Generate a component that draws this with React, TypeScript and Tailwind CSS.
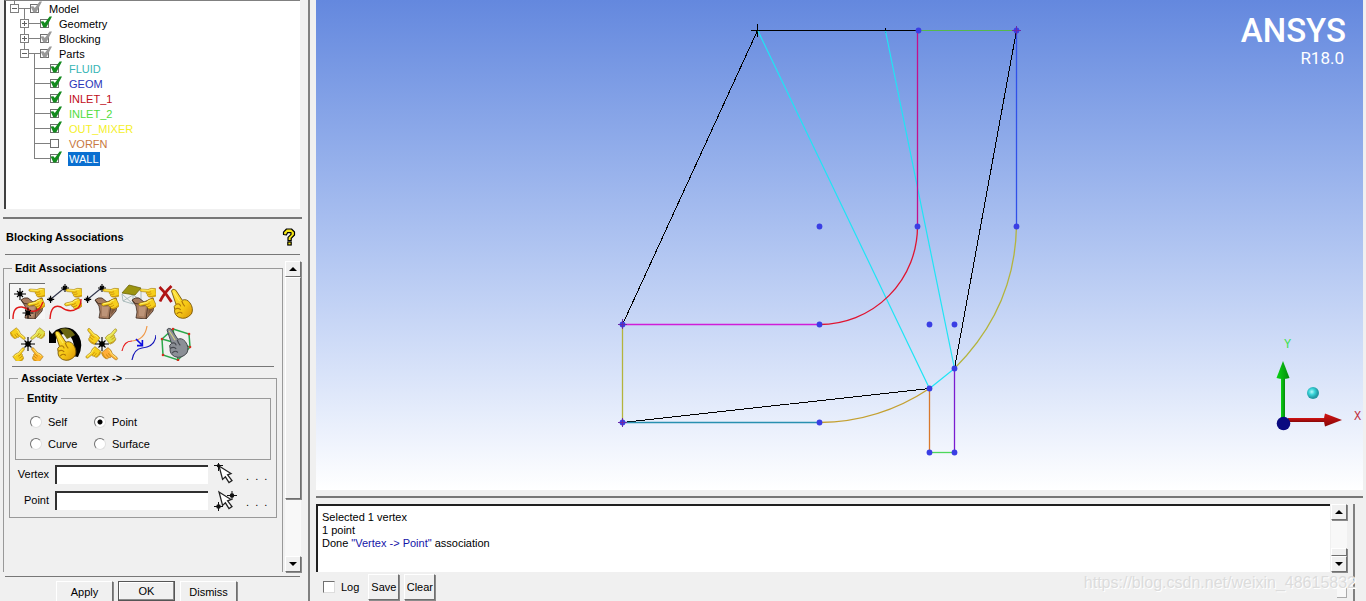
import React, { useState } from "react";

const RAISED =
  "border border-t-white border-l-white border-r-[#6f6f6f] border-b-[#6f6f6f] bg-[#f0f0f0] shadow-[1px_1px_0_#8a8a8a]";

/* ---------- model tree ---------- */

type CheckState = "on" | "mixed" | "off";

function TreeCheck({ id, state }: { id: string; state: CheckState }) {
  return (
    <span className="relative block h-[9px] w-[9px] shrink-0">
      <input
        id={id}
        type="checkbox"
        defaultChecked={state !== "off"}
        className="peer block h-[9px] w-[9px] appearance-none border border-[#6f6f6f] bg-white"
      />
      <svg
        className={
          "pointer-events-none absolute -top-[3px] left-0 hidden h-[13px] w-[13px] peer-checked:block " +
          (state === "mixed" ? "text-[#9a9a9a]" : "text-[#138a1e]")
        }
        viewBox="0 0 13 13"
      >
        <path d="M0.6 5.6 L3.4 5.2 L4.8 7 L9.6 0.6 L12 0.6 L6.2 11.4 L3.4 11.4 Z" fill="currentColor" />
      </svg>
    </span>
  );
}

function Expander({ open, onClick, label, place }: { open: boolean; onClick: () => void; label: string; place: string }) {
  return (
    <button
      type="button"
      aria-label={label}
      onClick={onClick}
      className={"absolute top-[3px] h-[9px] w-[9px] border border-[#808080] bg-white " + place}
    >
      <svg viewBox="0 0 7 7" className="block h-[7px] w-[7px]" shapeRendering="crispEdges">
        <path d={open ? "M1 3.5H6" : "M1 3.5H6M3.5 1V6"} stroke="#606060" fill="none" />
      </svg>
    </button>
  );
}

function Guides({ width, d }: { width: string; d: string }) {
  return (
    <svg className={"h-[15px] shrink-0 " + width} shapeRendering="crispEdges">
      <path d={d} stroke="#808080" fill="none" />
    </svg>
  );
}

const PARTS: { name: string; color: string; state: CheckState }[] = [
  { name: "FLUID", color: "text-[#35b5b5]", state: "on" },
  { name: "GEOM", color: "text-[#2a35b8]", state: "on" },
  { name: "INLET_1", color: "text-[#c00c18]", state: "on" },
  { name: "INLET_2", color: "text-[#4fdc3c]", state: "on" },
  { name: "OUT_MIXER", color: "text-[#f4f02a]", state: "on" },
  { name: "VORFN", color: "text-[#c87840]", state: "off" },
  { name: "WALL", color: "bg-[#0a6fd0] text-white", state: "on" },
];

function ModelTree() {
  const [model, setModel] = useState(true);
  const [parts, setParts] = useState(true);
  const row = "relative flex h-[15px] items-center";
  const label = "ml-[9px] px-px leading-[14px]";
  return (
    <div className="mr-2 ml-1 h-[209px] shrink-0 overflow-hidden border-t border-l-2 border-t-[#808080] border-l-[#404040] bg-white">
      <ul>
        <li>
          <div className={row}>
            <Guides width="w-[24px]" d="M8.5 0V4M12 7.5H24M18.5 7V15" />
            <Expander open={model} onClick={() => setModel(!model)} label="Toggle Model" place="left-[4px]" />
            <TreeCheck id="t-model" state="mixed" />
            <label htmlFor="t-model" className={label}>Model</label>
          </div>
        </li>
        {model && (
          <>
            <li className={row}>
              <Guides width="w-[34px]" d="M18.5 0V15M22 7.5H34" />
              <Expander open={false} onClick={() => {}} label="Toggle Geometry" place="left-[14px]" />
              <TreeCheck id="t-geometry" state="on" />
              <label htmlFor="t-geometry" className={label}>Geometry</label>
            </li>
            <li className={row}>
              <Guides width="w-[34px]" d="M18.5 0V15M22 7.5H34" />
              <Expander open={false} onClick={() => {}} label="Toggle Blocking" place="left-[14px]" />
              <TreeCheck id="t-blocking" state="mixed" />
              <label htmlFor="t-blocking" className={label}>Blocking</label>
            </li>
            <li className={row}>
              <Guides width="w-[34px]" d="M18.5 0V7M22 7.5H34M28.5 7V15" />
              <Expander open={parts} onClick={() => setParts(!parts)} label="Toggle Parts" place="left-[14px]" />
              <TreeCheck id="t-parts" state="mixed" />
              <label htmlFor="t-parts" className={label}>Parts</label>
            </li>
            {parts &&
              PARTS.map((p, i) => (
                <li key={p.name} className={row}>
                  <Guides width="w-[44px]" d={i === PARTS.length - 1 ? "M28.5 0V7.5H44" : "M28.5 0V15M28 7.5H44"} />
                  <TreeCheck id={"t-" + p.name} state={p.state} />
                  <label htmlFor={"t-" + p.name} className={label + " " + p.color}>
                    {p.name}
                  </label>
                </li>
              ))}
          </>
        )}
      </ul>
    </div>
  );
}

/* ---------- icon pieces ---------- */

function Hand({ t, fill = "#f6cf1c", line = "#8a6408", shade = "#c98c0a" }: { t: string; fill?: string; line?: string; shade?: string }) {
  return (
    <g transform={t}>
      <path
        d="M0.3 2.6 Q0.2 1.2 2 1.2 L8.4 1.8 Q11 -0.3 16 0.6 L17 9.4 Q13 11.8 9.4 10.6 Q7.2 9.4 7.8 7.4 Q6 6.6 6.8 4.8 L1.6 4.2 Q0.4 3.8 0.3 2.6 Z"
        fill={fill}
        stroke={line}
        strokeWidth="0.5"
      />
      <path d="M7 4.8 Q9 5.6 11.5 4.4 M8 7.2 Q10 8 12 6.8 M9 9.8 Q12 10.8 16.4 8.6" stroke={shade} strokeWidth="0.9" fill="none" />
      <path d="M2 2.2 L8.8 2.8 Q11 1.4 14 1.8" stroke="#fff27a" strokeWidth="0.9" fill="none" />
    </g>
  );
}

function Star({ x, y, r = 5 }: { x: number; y: number; r?: number }) {
  return (
    <g stroke="#000" strokeWidth="1.1">
      <path d={`M${x - r} ${y}H${x + r}M${x} ${y - r}V${y + r}`} />
      <path d={`M${x - r / 2} ${y - r / 2}L${x + r / 2} ${y + r / 2}M${x + r / 2} ${y - r / 2}L${x - r / 2} ${y + r / 2}`} />
      <circle cx={x} cy={y} r={r / 3.2} />
    </g>
  );
}

function Block() {
  return (
    <g stroke="#3a261a" strokeWidth="0.8">
      <path d="M11 16 Q14 13 18 14 L23 18 L32 14 Q34 20 32 27 L25 35 L15 34 Q17 28 15 22 Z" fill="#a67c60" />
      <path d="M11 16 Q14 21 18 20 Q22 22 27 20 Q26 28 25 35 M27 20 L32.5 16" fill="none" />
      <path d="M18 22 Q22 24 25 22 L23 32.5 L18 32 Z" fill="#bd9478" stroke="none" />
      <path d="M28 21 L32 18 L31 26 L27 31 Z" fill="#7c583e" stroke="none" />
    </g>
  );
}

const TwoHands = () => (
  <>
    <Hand t="translate(18.5 4) scale(1 .85)" />
    <Hand t="translate(18 15.5) rotate(-18 9 6) scale(1 .95)" />
  </>
);

const BIG_HAND =
  "M1 2 Q2 -0.8 5.2 1.2 L11.6 11 Q15.6 9.2 19 13.4 Q23 19 20.6 24.4 Q15 30.6 8.5 28 Q3.4 25.4 4 20 Q2.6 16.8 5.4 15 Z";

function BigHand({ t, fill = "url(#gold)", line = "#7a5806", shade = "#b07808" }: { t: string; fill?: string; line?: string; shade?: string }) {
  return (
    <g transform={t}>
      <path d={BIG_HAND} fill={fill} stroke={line} strokeWidth="0.9" />
      <path d="M5.4 15 Q9 13.6 10 17 M4 20 Q8 17.6 10 20.6 M6 24.6 Q9 21.4 11.6 24 M11 11.5 Q12 15 14 17" stroke={shade} strokeWidth="1.1" fill="none" />
      <path d="M3 2.6 L9 12" stroke="#fff27a" strokeWidth="1" fill="none" opacity="0.7" />
    </g>
  );
}

const TOOLS: { name: string; art: React.ReactNode }[] = [
  {
    name: "Associate Vertex",
    art: (
      <>
        <Block />
        <TwoHands />
        <Star x={10} y={10} r={6} />
        <path d="M3 35 Q3 22 12 23 Q17 24 21 27 Q29 29 33 18" fill="none" stroke="#e01818" strokeWidth="1.4" />
        <Star x={18} y={29} r={5.5} />
      </>
    ),
  },
  {
    name: "Associate Edge to Curve",
    art: (
      <>
        <path d="M4 15 L18 3.5" stroke="#30344a" strokeWidth="1.1" />
        <Star x={3.6} y={15.4} r={3.6} />
        <Star x={18} y={4} r={4} />
        <TwoHands />
        <path d="M3 35 Q4 19 14 23 Q23 30 31 24 Q34 21 34 15" fill="none" stroke="#e01818" strokeWidth="1.4" />
      </>
    ),
  },
  {
    name: "Associate Edge to Surface",
    art: (
      <>
        <path d="M4 15 L18 3.5" stroke="#30344a" strokeWidth="1.1" />
        <Star x={3.6} y={15.4} r={3.6} />
        <Star x={18} y={4} r={4} />
        <Block />
        <TwoHands />
      </>
    ),
  },
  {
    name: "Associate Face to Surface",
    art: (
      <>
        <path d="M1 10 L2 17 L12 20 L20 16 L20 6 M12 11 V20 M1 10 L12 20 M12 11 L2 17 M12 11 L20 16" fill="none" stroke="#a3b5b5" strokeWidth="0.9" />
        <path d="M1 9 L8 1 L20 4 L14 11 Z" fill="#9c9410" stroke="#6b6408" strokeWidth="0.8" />
        <Block />
        <TwoHands />
      </>
    ),
  },
  {
    name: "Disassociate from Geometry",
    art: (
      <>
        <path d="M1.5 3 Q8 9 13.5 18 M13.5 2 Q6 9 2 17.5" fill="none" stroke="#b01414" strokeWidth="2.8" />
        <BigHand t="translate(12.5 5) scale(1.02)" />
      </>
    ),
  },
  {
    name: "Update Associations",
    art: (
      <>
        <Hand t="translate(14 13) rotate(45) translate(1 -3) scale(-.9 .9)" />
        <Hand t="translate(22 13) rotate(-45) translate(-1 -3) scale(.9) " fill="#dfe04a" />
        <Hand t="translate(14 23) rotate(-45) translate(1 -3) scale(-.9 .9)" />
        <Hand t="translate(22 23) rotate(45) translate(-1 -3) scale(.9)" fill="#ffb62e" />
        <Star x={18} y={18} r={7} />
      </>
    ),
  },
  {
    name: "Reset Association",
    art: (
      <>
        <path d="M2 4 V17 H9 V13 Q15 6 22 9 Q29 15 26 30 L31 31 Q37 20 32 10 Q24 -3 9 4 L5 8 Z" fill="#000" />
        <path d="M13 3 Q23 0 28 9 L20 13 Z" fill="#6b6610" />
        <BigHand t="translate(7 5) scale(1.02)" />
      </>
    ),
  },
  {
    name: "Snap Project Vertices",
    art: (
      <>
        <Hand t="translate(3.5 3) rotate(45) translate(0 -3) scale(.95)" />
        <Hand t="translate(33 3.5) rotate(-45) translate(0 -3) scale(-.9 .9)" fill="#dfe04a" />
        <Hand t="translate(2.5 32.5) rotate(-45) translate(0 -3) scale(.9)" />
        <Hand t="translate(33 34) rotate(45) translate(0 -3) scale(-.95 .95)" fill="#ffae3a" />
        <Star x={18} y={18} r={7} />
      </>
    ),
  },
  {
    name: "Group Curves",
    art: (
      <>
        <path d="M1 25 Q3 15 11 15" fill="none" stroke="#e81c1c" strokeWidth="1.2" />
        <path d="M11 15 Q24 14 26 0" fill="none" stroke="#f09a4a" strokeWidth="1.2" />
        <path d="M11 34 Q13 23 21 22 Q34 21 35 9" fill="none" stroke="#1414b8" strokeWidth="1.2" />
        <path d="M15 13 L21 19 M21.4 14 V19.6 H16" fill="none" stroke="#0c0ce0" strokeWidth="1.6" />
      </>
    ),
  },
  {
    name: "Auto Associate",
    art: (
      <>
        <path d="M15 3 L31 8 L32 21 L20 34 L5 29 L4 13 Z M15 3 L20 34 M4 13 L32 21" fill="none" stroke="#2aa84a" strokeWidth="1.5" />
        <BigHand t="translate(8 2) scale(1.02)" fill="#8b8f96" line="#3c3f45" shade="#45484e" />
        {[[15, 3], [31, 8], [32, 21], [20, 34], [5, 29], [4, 13]].map(([x, y]) => (
          <circle key={x} cx={x} cy={y} r="1.3" fill="#d03020" />
        ))}
      </>
    ),
  },
];

function ToolGrid() {
  const [active, setActive] = useState(0);
  return (
    <div className="grid w-max grid-cols-5 gap-x-px gap-y-1.5 pt-2">
      {TOOLS.map((t, i) => (
        <button
          key={t.name}
          type="button"
          aria-label={t.name}
          aria-pressed={i === active}
          onClick={() => setActive(i)}
          className={
            "h-9 w-9 border-t border-l " + (i === active ? "border-[#6f6f6f] bg-[#f6f6f6]" : "border-transparent")
          }
        >
          <svg viewBox="0 0 35 35" className="block h-[35px] w-[35px]">
            {t.art}
          </svg>
        </button>
      ))}
    </div>
  );
}

/* ---------- small controls ---------- */

function Arrow({ up }: { up?: boolean }) {
  return (
    <svg viewBox="0 0 8 4" className="h-1 w-2">
      <path d={up ? "M0 4 L4 0 L8 4 Z" : "M0 0 L4 4 L8 0 Z"} fill="#000" />
    </svg>
  );
}

function ScrollButton({ up, label }: { up?: boolean; label: string }) {
  return (
    <button type="button" aria-label={label} className={"flex h-4 w-4 shrink-0 items-center justify-center " + RAISED}>
      <Arrow up={up} />
    </button>
  );
}

function Radio({ label, checked }: { label: string; checked?: boolean }) {
  return (
    <label className="flex h-[22px] items-center gap-1.5">
      <input
        type="radio"
        name="entity"
        defaultChecked={checked}
        className="m-0 h-3 w-3 appearance-none rounded-full border border-t-[#707070] border-r-[#e0e0e0] border-b-[#e0e0e0] border-l-[#707070] bg-white checked:bg-[radial-gradient(circle,#000_2px,#fff_3px)]"
      />
      {label}
    </label>
  );
}

function PickRow({ label, children }: { label: string; children: React.ReactNode }) {
  const id = "pick-" + label;
  return (
    <div className="flex h-[22px] items-center">
      <label htmlFor={id} className="w-[38px] text-right">
        {label}
      </label>
      <input
        id={id}
        className="ml-1.5 h-[19px] w-[153px] border-t-2 border-l-2 border-[#303030] bg-white px-1 outline-none"
      />
      <button type="button" aria-label={"Pick " + label.toLowerCase()} className="ml-1.5">
        <svg viewBox="0 0 24 22" className="block h-[22px] w-6">
          {children}
        </svg>
      </button>
      <button type="button" className="ml-2 pt-1 leading-3" aria-label={"More " + label.toLowerCase() + " options"}>
        .&nbsp; .&nbsp; .
      </button>
    </div>
  );
}

const POINTER = "M5 3 L17 10.5 L13.6 11.8 L18 17.6 L15 19.6 L11.4 13.8 L8.6 16.4 Z";

function SidePanel() {
  return (
    <aside className="flex w-[310px] shrink-0 flex-col border-r-2 border-[#808080]">
      <ModelTree />
      <div className="mt-2 mr-1.5 ml-[3px] h-0.5 shrink-0 bg-[#777]" />
      <header className="mr-2 ml-[5px] flex h-9 shrink-0 items-center justify-between border-b border-[#777] pr-1 pl-px">
        <h1 className="pt-0.5 text-[11px] font-bold">Blocking Associations</h1>
        <button type="button" aria-label="Help">
          <svg viewBox="0 0 14 18" className="block h-[18px] w-3.5">
            <path d="M1.5 6.5 V4.2 L4.5 1 H9.5 L12.5 4 V7 L9.2 10.4 V12.6 H6 V9.4 L9 6.4 V4.6 H5.6 L4.4 7 Z" fill="#f5e614" stroke="#000" strokeWidth="1.2" strokeLinejoin="round" />
            <rect x="5.8" y="14" width="3.4" height="3" fill="#f5e614" stroke="#000" strokeWidth="1.2" />
          </svg>
        </button>
      </header>

      <div className="mt-1.5 flex min-h-0 flex-1 pr-[7px] pl-[3px]">
        <fieldset className="min-w-0 flex-1 overflow-hidden border border-b-0 border-[#999]">
          <legend className="ml-2 px-[3px] leading-[14px] font-bold">Edit Associations</legend>
          <div className="px-[5px]">
            <ToolGrid />
            <div className="mt-[5px] mr-[3px] ml-[3px] h-px bg-[#777]" />
            <fieldset className="mt-1 border border-[#999] px-[5px] pb-1.5">
              <legend className="ml-[3px] px-[3px] leading-[14px] font-bold">Associate Vertex -&gt;</legend>
              <fieldset className="mt-1.5 border border-[#999]">
                <legend className="ml-2 px-[3px] leading-[14px] font-bold">Entity</legend>
                <div className="grid w-max grid-cols-2 gap-x-2 pt-1.5 pb-1 pl-3.5">
                  <Radio label="Self" />
                  <Radio label="Point" checked />
                  <Radio label="Curve" />
                  <Radio label="Surface" />
                </div>
              </fieldset>
              <div className="-ml-1 flex flex-col gap-1 pt-[3px]">
                <PickRow label="Vertex">
                  <path d={POINTER} fill="#fff" stroke="#222" strokeWidth="1.3" />
                  <path d="M0 2.5H9M4.5 0V8" stroke="#111" />
                  <circle cx="4.5" cy="2.8" r="1.8" fill="#111" />
                </PickRow>
                <PickRow label="Point">
                  <path d={POINTER} fill="#fff" stroke="#222" strokeWidth="1.3" />
                  <path d="M0 17.5H9M4.5 13V22M13 6.5H23M18 2V11" stroke="#111" />
                  <circle cx="4.5" cy="17.5" r="2.3" fill="#111" />
                  <circle cx="18" cy="6.5" r="2.3" fill="#111" />
                </PickRow>
              </div>
            </fieldset>
          </div>
        </fieldset>
        <div className="ml-[2px] flex w-4 flex-col bg-[#f8f8f8]">
          <ScrollButton up label="Scroll panel up" />
          <div className={"h-[222px] " + RAISED} />
          <div className="flex-1" />
          <ScrollButton label="Scroll panel down" />
        </div>
      </div>

      <footer className="mt-1 mr-2 ml-[5px] flex h-[25px] shrink-0 gap-[5px] overflow-hidden border-t border-[#777] pt-1 pl-[51px]">
        <button type="button" className={"h-[22px] w-[57px] " + RAISED}>Apply</button>
        <button type="button" className="h-5 w-[57px] border border-[#555] bg-[#f0f0f0] shadow-[inset_-1px_-1px_0_#8a8a8a,inset_1px_1px_0_#fff]">
          OK
        </button>
        <button type="button" className={"h-[22px] w-[57px] " + RAISED}>Dismiss</button>
      </footer>
    </aside>
  );
}

/* ---------- graphics viewport ---------- */

const DOTS = [
  [602, 30], [700, 30], [503, 226], [601, 226], [700, 226], [306, 324], [503, 324], [613, 324],
  [638, 324], [638, 368], [613, 388], [306, 422], [503, 422], [613, 452], [638, 452],
];

function Viewport() {
  return (
    <section className="relative mr-[3px] min-h-0 flex-1 overflow-hidden bg-linear-to-b from-[#6488de] to-white">
      <svg viewBox="0 0 1047 490" className="block h-full w-full" fill="none">
        <defs>
          <radialGradient id="ball" cx=".4" cy=".4">
            <stop offset="0" stopColor="#b8fafa" />
            <stop offset=".5" stopColor="#38d4d8" />
            <stop offset="1" stopColor="#249aa4" />
          </radialGradient>
          <linearGradient id="yAxis">
            <stop offset="0" stopColor="#0ad414" />
            <stop offset="1" stopColor="#068a0c" />
          </linearGradient>
          <linearGradient id="xAxis" x2="0" y2="1">
            <stop offset="0" stopColor="#d41414" />
            <stop offset="1" stopColor="#860606" />
          </linearGradient>
        </defs>
        <path
          d="M306.5 324.5 L441.5 30.5 H602 M700.5 30.5 L638.5 368.5 M306.5 422.5 L613.5 388.5"
          stroke="#000"
          shapeRendering="crispEdges"
        />
        <path d="M435 30.5H449M441.5 24V37M569.5 28V33" stroke="#000" />
        <path d="M442 31 L613.5 388.5 L638.5 368.5 L569.5 31" stroke="#20e4f4" strokeWidth="1.2" />
        <path d="M602 30.5H700" stroke="#55b84c" strokeWidth="1.2" />
        <path d="M601.5 30V226" stroke="#c4108c" strokeWidth="1.3" />
        <path d="M700.5 30V226" stroke="#3050e8" strokeWidth="1.3" />
        <path d="M306 324.5H503" stroke="#d01cd8" strokeWidth="1.3" />
        <path d="M306.5 324V422" stroke="#b4b43c" strokeWidth="1.3" />
        <path d="M306 422.5H503" stroke="#2890b0" strokeWidth="1.3" />
        <path d="M613.5 388V452" stroke="#d8782c" strokeWidth="1.3" />
        <path d="M638.5 368V452" stroke="#7a1cd0" strokeWidth="1.3" />
        <path d="M613 452.5H638" stroke="#4cd85a" strokeWidth="1.3" />
        <path d="M601.5 226 A98 98 0 0 1 503.5 324.5" stroke="#e01430" strokeWidth="1.3" />
        <path d="M700.5 226 Q699 308 638.5 368.5" stroke="#b4b43c" strokeWidth="1.3" />
        <path d="M613.5 388.5 Q563 422 503.5 422.5" stroke="#c4a030" strokeWidth="1.3" />
        {DOTS.map(([x, y]) => (
          <circle key={x + "-" + y} cx={x + 0.5} cy={y + 0.5} r="2.9" fill="#3a3ee4" />
        ))}
        <path d="M302 324.5H311M306.5 319V329M302 422.5H311M306.5 418V427M696 30.5H705M700.5 26V35" stroke="#6a2aa8" />
        <rect x="965" y="376" width="4" height="46" fill="url(#yAxis)" />
        <path d="M967 361 L973.5 378 Q967 380 960.5 378 Z" fill="url(#yAxis)" />
        <rect x="972" y="418" width="38" height="4" fill="url(#xAxis)" />
        <path d="M1026 420 L1009 413.5 Q1007 420 1009 426.5 Z" fill="url(#xAxis)" />
        <circle cx="967.5" cy="423.5" r="6.8" fill="#0a0a80" />
        <circle cx="997" cy="393" r="6" fill="url(#ball)" />
        <text x="968" y="348" fill="#3ce04c" className="font-['Liberation_Mono',monospace] text-[12px]">Y</text>
        <text x="1038" y="420" fill="#c03040" className="font-['Liberation_Mono',monospace] text-[12px]">X</text>
      </svg>
      <div className="absolute top-3 right-[17px] text-right font-[Roboto,'Liberation_Sans',sans-serif] text-white">
        <div className="text-[33px] leading-[38px] font-medium">ANSYS</div>
        <div className="pr-0.5 text-[17px] leading-4">R18.0</div>
      </div>
    </section>
  );
}

/* ---------- message log ---------- */

function MessageArea() {
  return (
    <section className="mt-1.5 flex h-[97px] shrink-0">
      <div className="flex min-w-0 flex-1 flex-col">
        <div className="flex h-[68px] shrink-0">
          <div role="log" className="min-w-0 flex-1 border-t-2 border-l-2 border-[#202020] bg-white px-1 pt-[5px] leading-[13px]">
            <p>Selected 1 vertex</p>
            <p>1 point</p>
            <p>
              Done <span className="text-[#1414a8]">"Vertex -&gt; Point"</span> association
            </p>
          </div>
          <div className="ml-px flex w-4 flex-col bg-[#f8f8f8]">
            <ScrollButton up label="Scroll messages up" />
            <div className="flex-1" />
            <div className={"h-2 " + RAISED} />
            <ScrollButton label="Scroll messages down" />
          </div>
        </div>
        <div className="flex items-start gap-[5px] pt-0.5 pl-[7px]">
          <label className="mr-1 flex h-[26px] items-center gap-1.5">
            <input
              type="checkbox"
              className="h-3 w-3 appearance-none border border-t-[#707070] border-r-[#ddd] border-b-[#ddd] border-l-[#707070] bg-white checked:bg-[#404040]"
            />
            Log
          </label>
          <button type="button" className={"h-[26px] w-[31px] " + RAISED}>Save</button>
          <button type="button" className={"h-[26px] w-[31px] " + RAISED}>Clear</button>
          <div className="mt-3 ml-auto h-3 w-2.5 border-r border-b border-[#aaa] bg-[#f8f8f8]" />
        </div>
      </div>
      <div className="mr-[11px] ml-1.5 w-0.5 bg-[#808080]" />
    </section>
  );
}

export default function App() {
  return (
    <div className="relative flex h-screen overflow-hidden bg-[#f0f0f0] font-['Liberation_Sans',Arial,sans-serif] text-[11px] leading-[13px] text-black">
      <svg className="absolute h-0 w-0" aria-hidden="true">
        <defs>
          <linearGradient id="gold" x2="1" y2="1">
            <stop offset="0" stopColor="#ffe63c" />
            <stop offset=".6" stopColor="#f6c816" />
            <stop offset="1" stopColor="#d89208" />
          </linearGradient>
        </defs>
      </svg>
      <SidePanel />
      <main className="flex min-w-0 flex-1 flex-col pl-1.5">
        <Viewport />
        <div className="mt-1.5 mr-[3px] h-0.5 shrink-0 bg-[#777]" />
        <MessageArea />
      </main>
      <div className="pointer-events-none absolute right-2.5 bottom-2 text-[16px] leading-5 text-[#dcdcdc] [text-shadow:1px_1px_0_#fff]">
        https://blog.csdn.net/weixin_48615832
      </div>
    </div>
  );
}
